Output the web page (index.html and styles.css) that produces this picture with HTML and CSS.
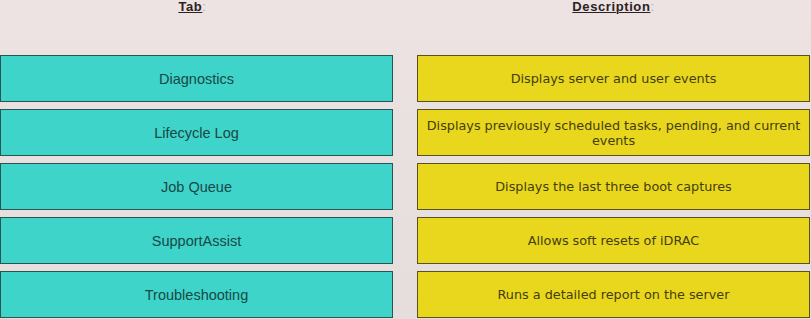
FILE: index.html
```html
<!DOCTYPE html>
<html>
<head>
<meta charset="utf-8">
<link rel="stylesheet" href="styles.css">
</head>
<body>
<div class="board">
  <div class="col col-tab">
    <div class="head"><u>Tab</u><span class="colon">:</span></div>
    <div class="box tab">Diagnostics</div>
    <div class="box tab">Lifecycle Log</div>
    <div class="box tab">Job Queue</div>
    <div class="box tab">SupportAssist</div>
    <div class="box tab">Troubleshooting</div>
  </div>
  <div class="col col-desc">
    <div class="head"><u>Description</u><span class="colon">:</span></div>
    <div class="box desc">Displays server and user events</div>
    <div class="box desc two">Displays previously scheduled tasks, pending, and current events</div>
    <div class="box desc">Displays the last three boot captures</div>
    <div class="box desc">Allows soft resets of iDRAC</div>
    <div class="box desc">Runs a detailed report on the server</div>
  </div>
</div>
</body>
</html>
```
FILE: styles.css
```css
html, body {
  margin: 0;
  padding: 0;
}
body {
  width: 811px;
  height: 319px;
  overflow: hidden;
  background: linear-gradient(180deg, #ede3e2 0%, #e9e1df 40%, #e6dedc 100%);
}
.board {
  display: grid;
  grid-template-columns: 393px 393px;
  column-gap: 24px;
}
.col {
  display: flex;
  flex-direction: column;
  gap: 7px;
}
.head {
  height: 48px;
  text-align: center;
  font-family: "Liberation Sans", Arial, sans-serif;
  font-weight: bold;
  font-size: 13px;
  letter-spacing: 0.6px;
  color: #2a2222;
  line-height: 14px;
}
.col-tab .head {
  padding-right: 8px;
}
.head u {
  text-decoration-thickness: 1px;
  text-underline-offset: 1px;
}
.colon {
  color: #b0a6a6;
  font-weight: normal;
}
.box {
  box-sizing: border-box;
  height: 47px;
  display: flex;
  align-items: center;
  justify-content: center;
  text-align: center;
}
.tab {
  background: #3fd4ca;
  border: 1px solid #285552;
  font-family: "Liberation Sans", Arial, sans-serif;
  font-size: 14.5px;
  color: #174846;
}
.desc {
  background: #e8d71c;
  border: 1px solid #5a5020;
  font-family: "DejaVu Sans", Verdana, sans-serif;
  font-size: 12.8px;
  color: #453d10;
  padding: 0 6px;
  line-height: 15px;
}
```
